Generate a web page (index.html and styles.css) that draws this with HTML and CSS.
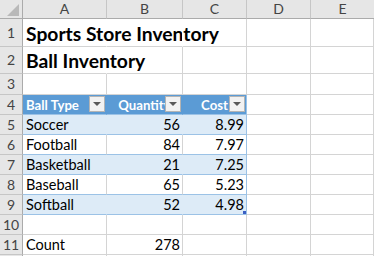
FILE: index.html
```html
<!DOCTYPE html>
<html>
<head>
<meta charset="utf-8">
<link rel="stylesheet" href="styles.css">
</head>
<body>
<div class="sheet">
  <div class="c corner"><span class="tri"></span></div>
  <div class="c ch">A</div>
  <div class="c ch">B</div>
  <div class="c ch">C</div>
  <div class="c ch">D</div>
  <div class="c ch last">E</div>

  <div class="c rh">1</div>
  <div class="c title nob">Sports Store Inventory</div>
  <div class="c nob"></div>
  <div class="c"></div>
  <div class="c"></div>
  <div class="c"></div>

  <div class="c rh">2</div>
  <div class="c title nob">Ball Inventory</div>
  <div class="c"></div>
  <div class="c"></div>
  <div class="c"></div>
  <div class="c"></div>

  <div class="c rh">3</div>
  <div class="c"></div>
  <div class="c"></div>
  <div class="c"></div>
  <div class="c"></div>
  <div class="c"></div>

  <div class="c rh">4</div>
  <div class="c th"><span>Ball Type</span><i class="dd"></i></div>
  <div class="c th th-mid"><span>Quantity</span><i class="dd"></i></div>
  <div class="c th th-mid th-end"><span>Cost</span><i class="dd"></i></div>
  <div class="c"></div>
  <div class="c"></div>

  <div class="c rh">5</div>
  <div class="c td band">Soccer</div>
  <div class="c td band num">56</div>
  <div class="c td band num end">8.99</div>
  <div class="c"></div>
  <div class="c"></div>

  <div class="c rh">6</div>
  <div class="c td">Football</div>
  <div class="c td num">84</div>
  <div class="c td num end">7.97</div>
  <div class="c"></div>
  <div class="c"></div>

  <div class="c rh">7</div>
  <div class="c td band">Basketball</div>
  <div class="c td band num">21</div>
  <div class="c td band num end">7.25</div>
  <div class="c"></div>
  <div class="c"></div>

  <div class="c rh">8</div>
  <div class="c td">Baseball</div>
  <div class="c td num">65</div>
  <div class="c td num end">5.23</div>
  <div class="c"></div>
  <div class="c"></div>

  <div class="c rh">9</div>
  <div class="c td band">Softball</div>
  <div class="c td band num">52</div>
  <div class="c td band num end hcell">4.98<i class="handle"></i></div>
  <div class="c"></div>
  <div class="c"></div>

  <div class="c rh">10</div>
  <div class="c"></div>
  <div class="c"></div>
  <div class="c"></div>
  <div class="c"></div>
  <div class="c"></div>

  <div class="c rh">11</div>
  <div class="c txt">Count</div>
  <div class="c txt num">278</div>
  <div class="c"></div>
  <div class="c"></div>
  <div class="c"></div>

  <div class="c rh"></div>
  <div class="c"></div>
  <div class="c"></div>
  <div class="c"></div>
  <div class="c"></div>
  <div class="c"></div>
</div>
</body>
</html>
```
FILE: styles.css
```css
* { box-sizing: border-box; margin: 0; padding: 0; }
html, body { width: 374px; height: 256px; overflow: hidden; background: #fff; }
body {
  font-family: Lato, "Noto Sans", "Liberation Sans", sans-serif;
  font-size: 14.5px;
  color: #000;
}
.sheet {
  display: grid;
  grid-template-columns: 23px 84px 76px 64px 64px 1fr;
  grid-template-rows: 19px 28px 27px 21px 20px 20px 20px 20px 20px 20px 20px 20px 20px;
  width: 374px;
  height: 256px;
  overflow: hidden;
  background: #fff;
}
.c {
  border-right: 1px solid #d4d4d4;
  border-bottom: 1px solid #d4d4d4;
  background: transparent;
  white-space: nowrap;
  display: flex;
  align-items: flex-end;
  line-height: 18px;
  min-width: 0;
}
.corner, .ch {
  background: #e6e6e6;
  border-right-color: #c6c6c6;
  border-bottom-color: #ababab;
}
.corner { border-right-color: #ababab; position: relative; }
.tri {
  position: absolute;
  right: 3px;
  bottom: 2px;
  width: 0; height: 0;
  border-left: 12px solid transparent;
  border-bottom: 12px solid #b9b9b9;
}
.ch {
  justify-content: center;
  align-items: center;
  color: #444;
  font-size: 14px;
  line-height: 16px;
}
.ch.last { border-right: none; }
.rh {
  background: #e6e6e6;
  border-right-color: #ababab;
  border-bottom-color: #c6c6c6;
  justify-content: center;
  align-items: center;
  color: #444;
  font-size: 14px;
}
.title {
  font-weight: 700;
  font-size: 19.3px;
  line-height: 22px;
  padding-left: 3px;
  padding-bottom: 1px;
  overflow: visible;
}
.nob { border-right-color: #fff; }
.th {
  position: relative;
  background: #5b9bd5;
  color: #fff;
  font-weight: 700;
  font-size: 13.2px;
  border-right-color: #5b9bd5;
  border-bottom-color: #9bc2e6;
  padding-left: 3px;
  overflow: hidden;
  justify-content: flex-start;
}
.th-mid { justify-content: center; padding-left: 0; }
.th-end { border-right-color: #9bc2e6; }
.dd {
  position: absolute;
  right: 1px;
  top: 1px;
  width: 16px;
  height: 16px;
  background: #f2f2f2;
  border: 1px solid #b4b4b4;
}
.dd::after {
  content: "";
  position: absolute;
  left: 3px;
  top: 5px;
  border-left: 4px solid transparent;
  border-right: 4px solid transparent;
  border-top: 4px solid #595959;
}
.td, .txt { padding-left: 3px; }
.td { border-bottom-color: #9bc2e6; }
.band { background: #ddebf7; border-right-color: #ddebf7; }
.num { justify-content: flex-end; padding-right: 2px; padding-left: 0; }
.end { border-right-color: #9bc2e6; }
.hcell { position: relative; }
.handle {
  position: absolute;
  right: 0;
  bottom: 0;
  width: 3px;
  height: 3px;
  background: #3a5fc4;
}
```
